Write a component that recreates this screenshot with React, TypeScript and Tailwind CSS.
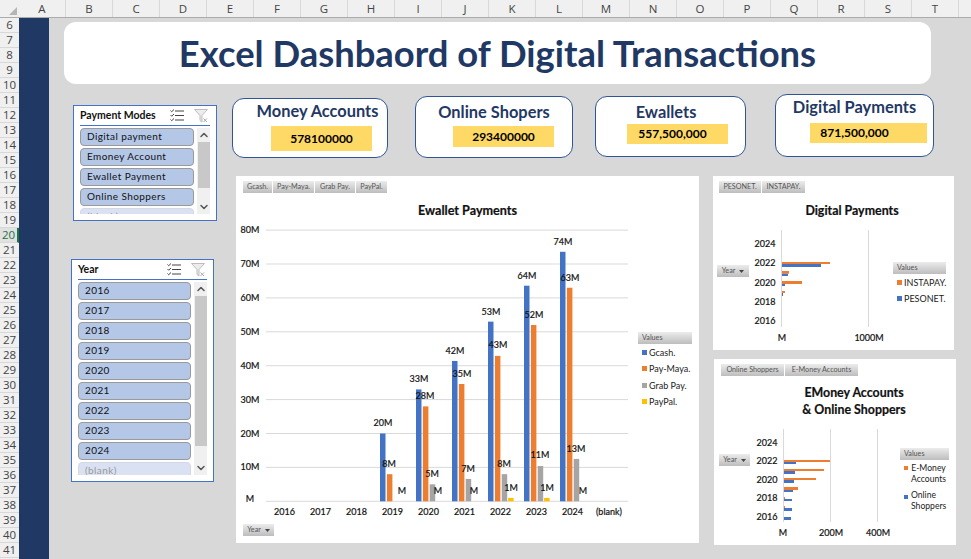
import { ChevronDown, ChevronUp } from "lucide-react";

const columns = ["A", "B", "C", "D", "E", "F", "G", "H", "I", "J", "K", "L", "M", "N", "O", "P", "Q", "R", "S", "T"];
const rows = Array.from({ length: 36 }, (_, i) => i + 6);

const blue = "#4472C4";
const orange = "#ED7D31";
const gray = "#A5A5A5";
const yellow = "#FFC000";

const fieldBtn =
  "flex items-center justify-center bg-gradient-to-b from-[#ececec] to-[#bdbdbd] text-[#555] text-[7.2px] leading-none";

// the charts' small labels read heavier than the regular weight
const chartSvg = "absolute inset-0 w-full h-full [&_text]:stroke-[#111] [&_text]:[stroke-width:0.2px]";

function ChecklistIcon() {
  return (
    <svg width="14" height="13" viewBox="0 0 14 13" fill="none" stroke="#444" strokeWidth="1">
      <path d="M5 2h9M5 6.5h9M5 11h9" />
      <path d="M0.5 1.5l1.2 1.2L4 0.5M0.5 6l1.2 1.2L4 5M0.5 10.5l1.2 1.2L4 9.5" />
    </svg>
  );
}

function ClearFilterIcon() {
  return (
    <svg width="14" height="14" viewBox="0 0 14 14" fill="#ececec" stroke="#bdbdbd" strokeWidth="1">
      <path d="M0.5 0.5h13L8 6.5v6.5L6 11.5V6.5z" />
      <path d="M9.5 9.5l3.5 3.5M13 9.5l-3.5 3.5" fill="none" stroke="#a8a8a8" />
    </svg>
  );
}

function Slicer({
  title,
  items,
  faded,
  className,
  thumbClass,
}: {
  title: string;
  items: string[];
  faded: string;
  className: string;
  thumbClass: string;
}) {
  return (
    <div className={`bg-white border border-[#4472C4] px-[6px] flex flex-col ${className}`}>
      <div className="h-[20px] flex items-center border-b border-[#4472C4] pr-[2px] shrink-0">
        <span className="text-[10.5px] font-bold text-[#111] flex-1 leading-none">{title}</span>
        <ChecklistIcon />
        <span className="w-[10px]" />
        <ClearFilterIcon />
      </div>
      <div className="flex flex-1 min-h-0 gap-[3px] pt-[2px] pb-[6px]">
        <div className="w-[114px] flex flex-col gap-[2px] overflow-hidden">
          {items.map((item) => (
            <div
              key={item}
              className="h-[18px] shrink-0 bg-[#B4C7E7] border border-[#9a9a9a] rounded-[4px] pl-[6px] pb-[1px] flex items-center text-[10px] tracking-[0.4px] text-[#111]"
            >
              {item}
            </div>
          ))}
          <div className="h-[18px] shrink-0 bg-[#DAE1F2] border border-[#d4d8e2] rounded-[4px] pl-[6px] pb-[1px] flex items-center text-[10px] tracking-[0.4px] text-[#999]">
            {faded}
          </div>
        </div>
        <div className="w-[13px] bg-[#f0f0f0] flex flex-col items-center">
          <ChevronUp size={12} strokeWidth={3} color="#555" className="h-[14px] shrink-0" />
          <div className={`w-[12px] bg-[#c8c8c8] ${thumbClass}`} />
          <ChevronDown size={12} strokeWidth={3} color="#555" className="h-[14px] shrink-0 mt-auto" />
        </div>
      </div>
    </div>
  );
}

function Kpi({
  title,
  value,
  cardClass,
  titleClass,
  boxClass,
}: {
  title: string;
  value: string;
  cardClass: string;
  titleClass: string;
  boxClass: string;
}) {
  return (
    <div className={`bg-white border border-[#2F5597] rounded-[12px] shrink-0 flex flex-col ${cardClass}`}>
      <div className={`text-[#1F3864] font-bold text-[16.4px] leading-[16px] text-center ${titleClass}`}>{title}</div>
      <div className={`bg-[#FFD966] flex items-center justify-center text-black font-bold text-[12px] leading-none ${boxClass}`}>
        {value}
      </div>
    </div>
  );
}

function Legend({ items, className }: { items: { color: string; label: string }[]; className: string }) {
  return (
    <div className={`absolute ${className}`}>
      <div className={`${fieldBtn} h-[12px] !justify-start pl-[4px]`}>Values</div>
      <div className="flex flex-col pl-[4px] pt-[2px] gap-[4.6px]">
        {items.map((it) => (
          <div key={it.label} className="flex items-center gap-[2px] h-[12px] text-[9px] text-[#222] leading-none">
            <span className="w-[5px] h-[5px] shrink-0" style={{ backgroundColor: it.color }} />
            {it.label}
          </div>
        ))}
      </div>
    </div>
  );
}

function YearButton({ className }: { className: string }) {
  return (
    <div className={`absolute ${fieldBtn} h-[12px] gap-[4px] ${className}`}>
      Year
      <svg width="5" height="3" viewBox="0 0 5 3">
        <path d="M0 0h5L2.5 3z" fill="#444" />
      </svg>
    </div>
  );
}

const mainCats = [
  { c: 392.5, y: "2019", g: 20, o: 8, a: 0, p: 0 },
  { c: 428.5, y: "2020", g: 33, o: 28, a: 5, p: 0 },
  { c: 464.5, y: "2021", g: 41.4, o: 34.6, a: 6.6, p: 0 },
  { c: 500.5, y: "2022", g: 53, o: 42.9, a: 8, p: 1 },
  { c: 536.5, y: "2023", g: 63.6, o: 52, a: 10.4, p: 1 },
  { c: 572.5, y: "2024", g: 73.6, o: 63, a: 12.5, p: 0 },
];

const mainLabels: [string, number, number][] = [
  ["20M", 383, 423], ["8M", 389, 464], ["M", 402, 491],
  ["33M", 419, 379], ["28M", 425, 396], ["5M", 432, 474], ["M", 438, 491],
  ["42M", 455, 351], ["35M", 462, 374], ["7M", 468, 469], ["M", 474, 491],
  ["53M", 491, 312], ["43M", 498, 345], ["8M", 504, 464], ["1M", 511, 488],
  ["64M", 527, 276], ["52M", 534, 315], ["11M", 540, 455], ["1M", 547, 488],
  ["74M", 563, 242], ["63M", 570, 278], ["13M", 576, 449], ["M", 583, 491],
];

function EwalletChart() {
  const base = 501.3;
  const y = (v: number) => base - v * 3.39;
  const bar = (x: number, v: number, fill: string) =>
    v > 0 && <rect x={x} y={y(v)} width={5.5} height={v * 3.39} fill={fill} />;
  return (
    <svg viewBox="236 176 463 367" className={chartSvg} fontSize="9" fill="#111">
      {[0, 10, 20, 30, 40, 50, 60, 70, 80].map((v) => (
        <g key={v}>
          <line x1={266} x2={628} y1={y(v)} y2={y(v)} stroke="#d9d9d9" />
          <text x={250} y={(v === 0 ? 499 : y(v)) + 3} textAnchor="middle">{v === 0 ? "M" : `${v}M`}</text>
        </g>
      ))}
      <text x={467.5} y={215} textAnchor="middle" fontSize="12.6" fontWeight="700">Ewallet Payments</text>
      {["2016", "2017", "2018"].map((t, i) => (
        <text key={t} x={284.5 + i * 36} y={515} textAnchor="middle">{t}</text>
      ))}
      {mainCats.map((cat) => (
        <g key={cat.y}>
          {bar(cat.c - 12.5, cat.g, blue)}
          {bar(cat.c - 5.6, cat.o, orange)}
          {bar(cat.c + 1.2, cat.a, gray)}
          {bar(cat.c + 7.6, cat.p, yellow)}
          <text x={cat.c} y={515} textAnchor="middle">{cat.y}</text>
        </g>
      ))}
      <text x={609} y={515} textAnchor="middle">(blank)</text>
      {mainLabels.map(([t, lx, ly], i) => (
        <text key={i} x={lx} y={ly + 3} textAnchor="middle">{t}</text>
      ))}
    </svg>
  );
}

function DigitalChart() {
  const bars: [number, number, number, string][] = [
    [262, 2, 830, orange], [264, 3, 821, blue],
    [271, 2.7, 789, orange], [273.7, 2.3, 788, blue],
    [281, 3, 802, orange], [284, 2, 785, blue],
    [291, 2, 785, orange], [293, 3, 783, blue],
  ];
  return (
    <svg viewBox="713 176 241 174" className={chartSvg} fontSize="9" fill="#111">
      <text x={852} y={215} textAnchor="middle" fontSize="12.4" fontWeight="700">Digital Payments</text>
      <line x1={781.5} x2={781.5} y1={230} y2={327} stroke="#d9d9d9" />
      <line x1={868.5} x2={868.5} y1={230} y2={327} stroke="#d9d9d9" />
      {[["2024", 244], ["2022", 263], ["2020", 283], ["2018", 302], ["2016", 321]].map(([t, ty]) => (
        <text key={t} x={765} y={Number(ty) + 3} textAnchor="middle">{t}</text>
      ))}
      {bars.map(([by, h, end, fill], i) => (
        <rect key={i} x={782} y={by} width={end - 782} height={h} fill={fill} />
      ))}
      <text x={782} y={341} textAnchor="middle">M</text>
      <text x={869} y={341} textAnchor="middle">1000M</text>
    </svg>
  );
}

function EMoneyChart() {
  const bars: [number, number, number, string][] = [
    [460, 2, 830, orange], [462, 2, 796, blue],
    [469, 2, 824, orange], [471, 3, 795, blue],
    [478, 2, 816, orange], [480, 3, 794, blue],
    [487, 3, 798, orange], [490, 2, 793, blue],
    [497, 2, 785, orange], [499, 2, 792, blue],
    [506, 2, 785, orange], [508, 3, 792, blue],
    [517, 3, 791, blue],
  ];
  return (
    <svg viewBox="714 359 242 186" className={chartSvg} fontSize="9" fill="#111">
      <text x={854} y={397} textAnchor="middle" fontSize="12.4" fontWeight="700">EMoney Accounts</text>
      <text x={854} y={414} textAnchor="middle" fontSize="12.4" fontWeight="700">&amp; Online Shoppers</text>
      {[783.5, 830.5, 877.5].map((x) => (
        <line key={x} x1={x} x2={x} y1={429} y2={522} stroke="#d9d9d9" />
      ))}
      {[["2024", 443], ["2022", 461], ["2020", 480], ["2018", 498], ["2016", 517]].map(([t, ty]) => (
        <text key={t} x={767} y={Number(ty) + 3} textAnchor="middle">{t}</text>
      ))}
      {bars.map(([by, h, end, fill], i) => (
        <rect key={i} x={784} y={by} width={end - 784} height={h} fill={fill} />
      ))}
      <text x={783} y={536} textAnchor="middle">M</text>
      <text x={831} y={536} textAnchor="middle">200M</text>
      <text x={878} y={536} textAnchor="middle">400M</text>
    </svg>
  );
}

export default function App() {
  return (
    <div className="w-[971px] h-[559px] overflow-hidden flex flex-col font-['Lato','Liberation_Sans',sans-serif] bg-[#d8d8d8]">
      {/* column letters */}
      <div className="h-[18px] shrink-0 flex bg-[#f0f0f0] border-b border-[#ababab] font-['Open_Sans',sans-serif] text-[11.5px] text-[#444]">
        <div className="w-[19px] shrink-0 flex items-end justify-end pr-[2px] pb-[2px]">
          <span className="w-0 h-0 border-l-[8px] border-l-transparent border-b-[8px] border-b-[#b5b5b5]" />
        </div>
        {columns.map((c) => (
          <div key={c} className="w-[47px] shrink-0 text-center leading-[17px] border-r border-[#d8d8d8]">
            {c}
          </div>
        ))}
      </div>

      <div className="flex flex-1 min-h-0">
        {/* row numbers */}
        <div className="w-[19px] shrink-0 flex flex-col bg-[#f0f0f0] font-['Open_Sans',sans-serif] text-[11.5px] text-[#444]">
          {rows.map((r) => (
            <div
              key={r}
              className={
                r === 20
                  ? "h-[15px] shrink-0 text-center leading-[14px] text-[#217346] bg-[#e1e1e1] border-b border-[#d8d8d8] border-r-2 border-r-[#217346]"
                  : "h-[15px] shrink-0 text-center leading-[14px] border-b border-[#d8d8d8]"
              }
            >
              {r}
            </div>
          ))}
        </div>

        <div className="w-[30px] shrink-0 bg-[#1F3864]" />

        <div className="flex-1 min-w-0">
          <div className="ml-[15px] mt-[4px] w-[867px] h-[62px] bg-white rounded-[12px] flex items-center justify-center text-[#1F3864] font-bold text-[36.4px] leading-none">
            Excel Dashbaord of Digital Transactions
          </div>

          <div className="flex">
            {/* slicers */}
            <div className="w-[183px] shrink-0 flex flex-col">
              <Slicer
                title="Payment Modes"
                items={["Digital payment", "Emoney Account", "Ewallet Payment", "Online Shoppers"]}
                faded="(blank)"
                className="ml-[24px] mt-[21px] w-[144px] h-[116px]"
                thumbClass="h-[46px]"
              />
              <Slicer
                title="Year"
                items={["2016", "2017", "2018", "2019", "2020", "2021", "2022", "2023", "2024"]}
                faded="(blank)"
                className="ml-[22px] mt-[38px] w-[143px] h-[223px]"
                thumbClass="h-[150px]"
              />
            </div>

            <div className="flex-1 min-w-0">
              {/* kpi cards */}
              <div className="flex h-[92px] items-start">
                <Kpi
                  title="Money Accounts"
                  value="578100000"
                  cardClass="mt-[14px] w-[156px] h-[60px]"
                  titleClass="mt-[4px] ml-[15px]"
                  boxClass="mt-[7px] ml-[38px] w-[101px] h-[25px]"
                />
                <Kpi
                  title="Online Shopers"
                  value="293400000"
                  cardClass="mt-[12px] ml-[27px] w-[158px] h-[62px]"
                  titleClass="mt-[7px]"
                  boxClass="mt-[6px] ml-[37px] w-[101px] h-[21px]"
                />
                <Kpi
                  title="Ewallets"
                  value="557,500,000"
                  cardClass="mt-[12px] ml-[22px] w-[151px] h-[61px]"
                  titleClass="mt-[7px] mr-[9px]"
                  boxClass="mt-[4px] ml-[31px] w-[101px] h-[20px] pr-[10px]"
                />
                <Kpi
                  title="Digital Payments"
                  value="871,500,000"
                  cardClass="mt-[10px] ml-[29px] w-[159px] h-[63px]"
                  titleClass="mt-[4px]"
                  boxClass="mt-[8px] ml-[34px] w-[117px] h-[20px] pr-[28px]"
                />
              </div>

              {/* charts */}
              <div className="flex ml-[4px] items-start">
                <div className="relative w-[463px] h-[367px] bg-white shrink-0">
                  <EwalletChart />
                  <div className="relative flex gap-[1px] pt-[5px] pl-[7px]">
                    <div className={`${fieldBtn} w-[29px] h-[12px]`}>Gcash.</div>
                    <div className={`${fieldBtn} w-[41px] h-[12px]`}>Pay-Maya.</div>
                    <div className={`${fieldBtn} w-[40px] h-[12px]`}>Grab Pay.</div>
                    <div className={`${fieldBtn} w-[31px] h-[12px]`}>PayPal.</div>
                  </div>
                  <Legend
                    className="left-[402px] top-[156px] w-[54px]"
                    items={[
                      { color: blue, label: "Gcash." },
                      { color: orange, label: "Pay-Maya." },
                      { color: gray, label: "Grab Pay." },
                      { color: yellow, label: "PayPal." },
                    ]}
                  />
                  <YearButton className="left-[7px] top-[348px] w-[31px]" />
                </div>

                <div className="ml-[14px] flex flex-col shrink-0">
                  <div className="relative w-[241px] h-[174px] bg-white">
                    <DigitalChart />
                    <div className="relative flex gap-[1px] pt-[5px] pl-[6px]">
                      <div className={`${fieldBtn} w-[42px] h-[12px]`}>PESONET.</div>
                      <div className={`${fieldBtn} w-[43px] h-[12px]`}>INSTAPAY.</div>
                    </div>
                    <Legend
                      className="left-[180px] top-[86px] w-[53px]"
                      items={[
                        { color: orange, label: "INSTAPAY." },
                        { color: blue, label: "PESONET." },
                      ]}
                    />
                    <YearButton className="left-[4px] top-[89px] w-[32px]" />
                  </div>

                  <div className="relative mt-[9px] ml-[1px] w-[242px] h-[186px] bg-white">
                    <EMoneyChart />
                    <div className="relative flex gap-[1px] pt-[5px] pl-[7px]">
                      <div className={`${fieldBtn} w-[63px] h-[12px]`}>Online Shoppers</div>
                      <div className={`${fieldBtn} w-[73px] h-[12px]`}>E-Money Accounts</div>
                    </div>
                    <div className="absolute left-[186px] top-[89px] w-[49px]">
                      <div className={`${fieldBtn} h-[12px] !justify-start pl-[4px]`}>Values</div>
                      <div className="flex gap-[3px] pl-[4px] pt-[3px] text-[8.6px] leading-[11px] text-[#222]">
                        <span className="w-[4px] h-[4px] mt-[3px] shrink-0 bg-[#ED7D31]" />
                        <span className="text-center">E-Money<br />Accounts</span>
                      </div>
                      <div className="flex gap-[3px] pl-[4px] pt-[5px] text-[8.6px] leading-[11px] text-[#222]">
                        <span className="w-[4px] h-[4px] mt-[5px] shrink-0 bg-[#4472C4]" />
                        <span>Online<br />Shoppers</span>
                      </div>
                    </div>
                    <YearButton className="left-[5px] top-[95px] w-[31px]" />
                  </div>
                </div>
              </div>
            </div>
          </div>
        </div>
      </div>
    </div>
  );
}
